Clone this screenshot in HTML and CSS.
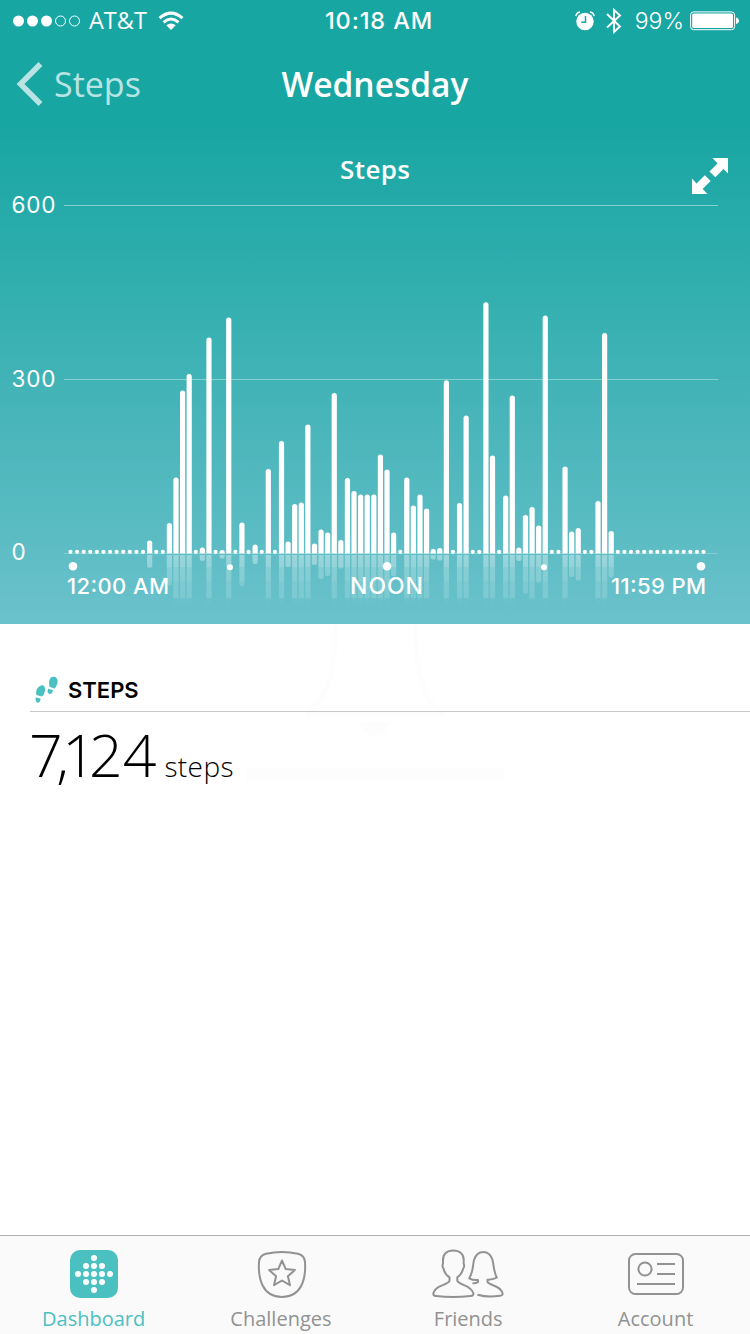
FILE: index.html
```
<!DOCTYPE html>
<html lang="en">
  <head>
    <meta charset="UTF-8" />
    <meta name="viewport" content="width=device-width, initial-scale=1.0" />
    <title>Steps - Wednesday</title>
    <link rel="stylesheet" href="styles.css">
  </head>
  <body>
    <div class="app">
      <header class="hero">
        <div class="status-bar">
          <div class="status-left">
            <svg class="signal" width="68" height="14" viewBox="0 0 68 14">
              <g fill="#fff">
                <circle cx="5.500" cy="7" r="5.500" />
                <circle cx="19.500" cy="7" r="5.500" />
                <circle cx="33.500" cy="7" r="5.500" />
              </g>
              <g fill="none" stroke="#fff">
                <circle cx="47.500" cy="7" r="5" />
                <circle cx="61.500" cy="7" r="5" />
              </g>
            </svg>
            <span class="carrier">AT&amp;T</span>
            <svg class="wifi" width="26" height="20" viewBox="0 0 26 20">
              <g fill="none" stroke="#fff" stroke-width="3">
                <path d="M1.600 7.200Q13-2.900 24.400 7.200" />
                <path d="M5.500 11.300Q13 4.700 20.500 11.300" />
              </g>
              <path d="M8.300 14.300Q13 10.600 17.700 14.300L13 19z" fill="#fff" />
            </svg>
          </div>
          <div class="clock">10:18 AM</div>
          <div class="status-right">
            <svg class="alarm" width="20" height="20" viewBox="0 0 20 20">
              <circle cx="10" cy="10.500" r="8.700" fill="#fff" />
              <path d="M.8 5.200Q1.400 1.700 5 1M19.200 5.200Q18.600 1.700 15 1" fill="none" stroke="#fff" stroke-width="1.400" />
              <path d="M10.500 5v6.200H6.300" fill="none" stroke="#18a6a3" stroke-width="1.500" />
            </svg>
            <svg class="bluetooth" width="16" height="28" viewBox="0 0 16 28">
              <path d="M1 7l13 12.500-6 5.500V3l6 5.500L1 20.500" fill="none" stroke="#fff" stroke-width="1.900" />
            </svg>
            <span class="percent">99%</span>
            <svg class="battery" width="50" height="20" viewBox="0 0 50 20">
              <rect x=".6" y=".9" width="44" height="17.800" rx="3" fill="none" stroke="#fff" />
              <rect x="2.200" y="2.600" width="40.800" height="14.400" rx="1.500" fill="#fff" />
              <path d="M46 6.500q3 .8 3 3.300t-3 3.300z" fill="#fff" />
            </svg>
          </div>
        </div>

        <nav class="nav-bar">
          <a class="back" href="#">
            <svg width="28" height="44" viewBox="0 0 28 44">
              <path d="M25.500 2L5.500 22l20 20" fill="none" stroke="#b9e4e3" stroke-width="5.500" />
            </svg>
            <span class="back-label">Steps</span>
          </a>
          <h1 class="day">Wednesday</h1>
        </nav>

        <!-- plot coordinates are page pixels, starting below the nav bar -->
        <svg class="chart" width="750" height="496" viewBox="0 128 750 496">
          <defs>
            <linearGradient id="reflection" gradientUnits="userSpaceOnUse" x1="0" y1="555" x2="0" y2="607">
              <stop offset="0" stop-color="#fff" stop-opacity=".37" />
              <stop offset=".23" stop-color="#fff" stop-opacity=".33" />
              <stop offset=".23" stop-color="#fff" stop-opacity=".24" />
              <stop offset=".5" stop-color="#fff" stop-opacity=".22" />
              <stop offset=".5" stop-color="#fff" stop-opacity=".18" />
              <stop offset=".82" stop-color="#fff" stop-opacity=".15" />
              <stop offset=".82" stop-color="#fff" stop-opacity=".04" />
              <stop offset="1" stop-color="#fff" stop-opacity="0" />
            </linearGradient>
          </defs>
          <g stroke="#83d0d1">
            <path d="M64 205.500H718M64 379.500H718M64 553.500H718" />
          </g>
          <g id="bars"></g>
          <g fill="#fff">
            <circle cx="73" cy="566.300" r="4.300" />
            <circle cx="230" cy="567.300" r="3" />
            <circle cx="387" cy="566.300" r="4.300" />
            <circle cx="544" cy="567.300" r="3" />
            <circle cx="701" cy="566.300" r="4.300" />
            <path d="M712.500 158H728V173.500L723.500 169 715.300 177.200 709.500 171.400 717.500 163.400z" />
            <path d="M692 178.500V194H707.500L702.600 189 710.600 181 704.800 175.200 696.500 183.500z" />
          </g>
          <g class="chart-text">
            <text class="chart-title" x="340" y="178.500" textLength="70">Steps</text>
            <text class="y-label" x="11.500" y="213" textLength="44">600</text>
            <text class="y-label" x="11.500" y="387" textLength="44">300</text>
            <text class="y-label" x="11.500" y="560">0</text>
            <text class="x-label" x="67" y="594" textLength="102">12:00 AM</text>
            <text class="x-label noon" x="350" y="594" textLength="73">NOON</text>
            <text class="x-label" x="611" y="594" textLength="95">11:59 PM</text>
          </g>
        </svg>
      </header>

      <main class="summary">
        <svg class="bell" width="310" height="160" viewBox="220 624 310 160">
          <path d="M335.500 624C335 668 331 692 309 714M415.500 624C416 668 420 692 440 714" fill="none" stroke="#fdfdfd" stroke-width="5" />
          <path d="M306 712h138v5H306zM360 722h30q-4 14-15 14t-15-14zM246 767.500h258v13H246z" fill="#fdfdfd" />
        </svg>
        <div class="summary-head">
          <svg class="feet" width="24" height="28" viewBox="0 0 24 28">
            <g fill="#4bc0c1">
              <path d="M5 10c3-1.700 5.500 0 5 4.500-.4 3.500-2 5.500-3.500 6L1.500 19C.5 15 2 11.500 5 10z" />
              <path d="M.8 21.500l4.800 1c-.2 2.500-1.300 4.500-3 4.200C.8 26.300.2 24.400.8 21.500z" />
              <path d="M17 1c3.500-1.200 6 1.400 5.600 5.200-.3 2.600-1.700 4.500-2.800 6.300L14.700 11C13.500 6.500 14 2.200 17 1z" />
              <path d="M13 12.800l5 1.200c-.5 2.600-1.800 4.300-3.500 4-1.800-.4-2.400-2.500-1.500-5.200z" />
            </g>
          </svg>
          <h2 class="summary-title">STEPS</h2>
        </div>
        <div class="total">
          <span class="total-value"><span class="thousands">7,</span><span class="narrow">1</span>24</span>
          <span class="total-unit">steps</span>
        </div>
      </main>

      <footer class="tab-bar">
        <a class="tab active" href="#">
          <svg width="72" height="50" viewBox="0 0 72 50">
            <rect x="12" y="1" width="48" height="48" rx="10" fill="#4bc0c1" />
            <g fill="#fff">
              <circle cx="36" cy="9" r="3" />
              <circle cx="28" cy="17" r="3" /><circle cx="36" cy="17" r="3" /><circle cx="44" cy="17" r="3" />
              <circle cx="20" cy="25" r="3" /><circle cx="28" cy="25" r="3" /><circle cx="36" cy="25" r="3" /><circle cx="44" cy="25" r="3" /><circle cx="52" cy="25" r="3" />
              <circle cx="28" cy="33" r="3" /><circle cx="36" cy="33" r="3" /><circle cx="44" cy="33" r="3" />
              <circle cx="36" cy="41" r="3" />
            </g>
          </svg>
          <span class="tab-label">Dashboard</span>
        </a>
        <a class="tab" href="#">
          <svg class="outline" width="72" height="50" viewBox="0 0 72 50">
            <path d="M21 4.800Q37 1 53 4.800 59.500 6.500 60 13C61 29 57 48 37 48S13 29 14 13Q14.500 6.500 21 4.800z" />
            <path d="M37 11.500l3.700 8.600 9.200.9-7 6.200 2.100 9L37 31.500l-8 4.700 2.100-9-7-6.200 9.200-.9z" />
          </svg>
          <span class="tab-label">Challenges</span>
        </a>
        <a class="tab" href="#">
          <svg class="outline" width="72" height="50" viewBox="0 0 72 50">
            <path d="M17.500 28.300Q12.500 25 11.700 20Q9.800 17.500 11 14.500V11C11 5 15 1.500 21.300 1.500S31.700 5 31.700 11V14.500Q32.800 17.500 31 20Q30 25 25.300 28.300V32C29 37 39 36 41.300 44.300 41.700 46 40.500 46.800 38.500 47Q21 49 4 47C2 46.800 1 46 1.400 44.300 3.500 36 14 37 17.500 32z" />
            <path d="M45.500 45.800Q56 48.800 68 46.800C70 46.500 71 45.500 70.500 44 68 36 58 37 55.500 33V30.700Q60 31 64.800 28.700C61.500 22 62 17 60.500 11Q58 3 51.300 3T42 11C40.500 17 41.500 22 37.300 29.300Q41 31.500 46 31V33.200Q43 34.700 40.500 34.200" />
          </svg>
          <span class="tab-label">Friends</span>
        </a>
        <a class="tab" href="#">
          <svg class="outline" width="72" height="50" viewBox="0 0 72 50">
            <rect x="9" y="5" width="54" height="40" rx="6.500" />
            <circle cx="25" cy="20" r="6.600" />
            <path d="M37 15h18M37 25h18M17 35h38" />
          </svg>
          <span class="tab-label">Account</span>
        </a>
      </footer>
    </div>

    <script>
      // Bar heights in pixels, one per 15 minutes, 0 = no activity
      const heights = [
        0, 0, 0, 0, 0, 0, 0, 0, 0, 0, 0, 0, 13, 0, 0, 30.5, 76, 163, 179.5, 0,
        6, 216, 0, 3.5, 236, 0, 31, 0, 9, 0, 84.5, 0, 112.5, 12, 49.5, 51, 129,
        10, 24, 21, 160.5, 13.5, 75.5, 62.5, 59, 59, 59, 99, 84, 21, 0, 76, 48,
        59, 45, 4.5, 5.5, 173.2, 0, 50.5, 138, 0, 0, 251.2, 98, 0, 58, 158, 6,
        38.5, 46.5, 28, 238, 0, 0, 87, 22, 25.5, 0, 0, 52.5, 220.5, 22.5, 0, 0,
        0, 0, 0, 0, 0, 0, 0, 0, 0, 0, 0, 0,
      ];
      const baseline = 553.5;

      const bars = heights.map((h, i) => {
        const x = 70.5 + i * 6.594;
        if (h === 0) {
          return `<circle cx="${x}" cy="551.8" r="2.1" fill="#fff" />`;
        }
        const left = x - 2.6;
        const top = baseline - h;
        const depth = Math.min(h, 52);
        return `
          <path d="M${left} ${baseline}V${top + Math.min(2.6, h)}a2.6 2.6 0 0 1 5.2 0V${baseline}z" fill="#fff" />
          <path d="M${left} 555h5.2v${Math.max(depth - 2.6, 0)}a2.6 2.6 0 0 1 -5.2 0z" fill="url(#reflection)" />`;
      });

      document.getElementById("bars").innerHTML = bars.join("");
    </script>
  </body>
</html>
```
FILE: styles.css
```
body {
  margin: 0;
  font-family: "Open Sans", "Liberation Sans", sans-serif;
  background-color: white;
}
a {
  text-decoration: none;
}
svg {
  display: block;
  flex: none;
}
.app {
  display: flex;
  flex-direction: column;
  width: 750px;
  height: 1334px;
  overflow: hidden;
}
.hero {
  height: 624px;
  color: white;
  background: linear-gradient(#18a6a3 125px, #32afaf 290px, #45b4b8 400px, #5cbcc4 540px, #6bc2cc 624px);
}
.status-bar {
  display: grid;
  grid-template-columns: 1fr auto 1fr;
  align-items: center;
  height: 40px;
  padding: 0 10px 0 13px;
  font-size: 23.5px;
  line-height: 40px;
}
.status-left,
.status-right {
  display: flex;
  align-items: center;
}
.status-right {
  justify-content: flex-end;
}
.carrier {
  margin: -1px 0 0 8px;
}
.wifi {
  margin-left: 11px;
}
.clock {
  padding: 1px 0 0 5px;
  font-family: Inter, sans-serif;
  font-size: 23.5px;
  font-weight: 500;
  letter-spacing: 0.9px;
}
.bluetooth {
  margin: 0 13px 0 11px;
}
.percent {
  margin-top: 1px;
  font-family: Inter, sans-serif;
  font-weight: 300;
  font-size: 23px;
}
.battery {
  margin-left: 6px;
}
.nav-bar {
  display: grid;
  grid-template-columns: 1fr auto 1fr;
  align-items: center;
  height: 88px;
  padding: 0 15px;
}
.back {
  display: flex;
  align-items: center;
  color: #b9e4e3;
  font-size: 34px;
}
.back-label {
  margin-left: 11px;
}
.day {
  margin: 0;
  font-size: 33.5px;
  font-weight: 600;
}
.chart-text {
  fill: white;
}
.chart-title {
  font-size: 26px;
  font-weight: 600;
}
.y-label {
  font-family: Inter, sans-serif;
  font-size: 22.5px;
}
.x-label {
  font-family: Inter, sans-serif;
  font-size: 22px;
  font-weight: 500;
}
.noon {
  font-size: 23px;
}
.summary {
  position: relative;
  flex: 1;
  padding: 50px 0 0 30px;
}
/* faint artwork behind the summary */
.bell {
  position: absolute;
  top: 0;
  left: 220px;
  z-index: -1;
}
.summary-head {
  display: flex;
  align-items: center;
  height: 37px;
  padding-left: 5px;
  border-bottom: 1px solid #c8c8c8;
}
.feet {
  margin-top: -6px;
}
.summary-title {
  margin: -5px 0 0 9px;
  font-family: Inter, sans-serif;
  font-size: 22px;
  font-weight: 600;
}
.total {
  display: flex;
  align-items: baseline;
  margin-left: -1px;
  font-weight: 300;
  line-height: 84px;
}
.total-value {
  font-size: 59px;
}
.thousands {
  letter-spacing: -6.5px;
}
.narrow {
  letter-spacing: -7px;
}
.total-unit {
  margin-left: 8px;
  font-size: 28px;
  letter-spacing: 0.4px;
}
.tab-bar {
  display: grid;
  grid-template-columns: repeat(4, 187.3px);
  height: 98px;
  border-top: 1px solid #b2b2b2;
  background-color: #fafafa;
}
.tab {
  display: flex;
  flex-direction: column;
  align-items: center;
  padding-top: 13px;
  color: #929292;
  font-size: 20px;
}
.tab.active {
  color: #4bc0c1;
}
.tab-label {
  margin-top: 7px;
  line-height: 26px;
}
.outline {
  fill: none;
  stroke: #929292;
  stroke-width: 2;
  stroke-linejoin: round;
}
```
